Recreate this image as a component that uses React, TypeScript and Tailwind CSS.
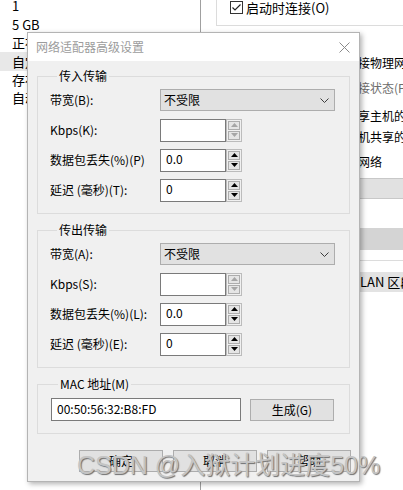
import type { ReactNode } from 'react';

function Spin({ disabled }: { disabled?: boolean }) {
  const c = disabled ? '#a6a6a6' : '#000000';
  return (
    <div className="flex h-[23px] w-[16px] flex-col gap-px border border-[#bcbcbc] bg-[#f0f0f0] p-px">
      <div className="flex flex-1 items-center justify-center border border-[#adadad] bg-[#e5e5e5]">
        <svg width="7" height="4" viewBox="0 0 7 4">
          <path d="M3.5 0L7 4H0Z" fill={c} />
        </svg>
      </div>
      <div className="flex flex-1 items-center justify-center border border-[#adadad] bg-[#e5e5e5]">
        <svg width="7" height="4" viewBox="0 0 7 4">
          <path d="M0 0H7L3.5 4Z" fill={c} />
        </svg>
      </div>
    </div>
  );
}

function NumField({ value, disabled }: { value: string; disabled?: boolean }) {
  return (
    <div className="flex h-[23px] items-stretch">
      <div className="flex h-[23px] w-[66px] items-center border border-[#7a7a7a] bg-white pb-[3px] pl-[5px] text-[12px] text-black">
        {value}
      </div>
      <Spin disabled={disabled} />
    </div>
  );
}

function Select() {
  return (
    <div className="flex h-[22px] flex-1 items-center justify-between border border-[#adadad] bg-[#e1e1e1] pl-[3px] pr-[5px] text-[12px] text-black">
      <span>不受限</span>
      <svg width="9" height="5" viewBox="0 0 9 5">
        <path d="M0.5 0.5L4.5 4.5L8.5 0.5" fill="none" stroke="#3c3c3c" strokeWidth="1" />
      </svg>
    </div>
  );
}

function Row({ label, children }: { label: string; children: ReactNode }) {
  return (
    <div className="flex h-[22px] items-center">
      <div className="w-[110px] shrink-0 text-[12px] text-black">{label}</div>
      {children}
    </div>
  );
}

function Group({ title, children, className }: { title: string; children: ReactNode; className?: string }) {
  return (
    <fieldset className={`border border-[#dcdcdc] ${className ?? ''}`}>
      <legend className="ml-[7px] px-[2px] text-[12px] leading-[16px] text-black">{title}</legend>
      {children}
    </fieldset>
  );
}

function Btn({ label, className }: { label: string; className?: string }) {
  return (
    <div
      className={`flex h-[22px] w-[84px] items-center justify-center border border-[#adadad] bg-[#e1e1e1] text-[12px] text-black ${className ?? ''}`}
    >
      {label}
    </div>
  );
}

function TransferGroup({
  title,
  keys,
  spinDisabled,
  className,
}: {
  title: string;
  keys: string[];
  spinDisabled?: boolean;
  className?: string;
}) {
  return (
    <Group title={title} className={`pb-[12px] pl-[12px] pr-[14px] pt-[5px] ${className ?? ''}`}>
      <div className="flex flex-col gap-[8px]">
        <Row label={`带宽(${keys[0]}):`}>
          <Select />
        </Row>
        <Row label={`Kbps(${keys[1]}):`}>
          <NumField value="" disabled={spinDisabled} />
        </Row>
        <Row label={`数据包丢失(%)(${keys[2]})${keys[2] === 'P' ? '' : ':'}`}>
          <NumField value="0.0" />
        </Row>
        <Row label={`延迟 (毫秒)(${keys[3]}):`}>
          <NumField value="0" />
        </Row>
      </div>
    </Group>
  );
}

export default function App() {
  return (
    <div className="relative flex h-[490px] w-[403px] overflow-hidden bg-white font-['Noto_Sans_CJK_SC','Noto_Sans',sans-serif] text-black">
      {/* left pane of the settings window behind */}
      <div className="w-[200px] shrink-0 text-[13px]">
        <div className="mt-[-3px] flex flex-col">
          {['1', '5 GB', '正在使用', '自定义', '存在', '自动检测'].map((t, i) => (
            <div
              key={i}
              className={`flex h-[18.4px] items-center whitespace-nowrap pl-[12px] ${i === 3 ? 'bg-[#e8e8e8]' : ''}`}
            >
              {t}
            </div>
          ))}
        </div>
      </div>

      {/* right pane of the settings window behind */}
      <div className="flex w-[203px] shrink-0 flex-col border-l border-[#a0a0a0] text-[12px]">
        <div className="ml-[15px] flex h-[26px] items-start border-b border-l border-[#dcdcdc] pl-[13px] pt-px">
          <div className="flex items-center gap-[3px] text-[13px] leading-[13px]">
            <svg width="13" height="13" viewBox="0 0 13 13">
              <rect x="0.5" y="0.5" width="12" height="12" fill="white" stroke="#333" />
              <path d="M2.5 6.5L5 9L10.5 3.5" fill="none" stroke="#222" strokeWidth="1.2" />
            </svg>
            <span>启动时连接(O)</span>
          </div>
        </div>
        <div className="mt-[27px] flex h-[20px] items-center whitespace-nowrap pl-[145px]">连接物理网络</div>
        <div className="mt-[5px] flex h-[20px] items-center whitespace-nowrap pl-[145px] text-[#6d6d6d]">连接状态(P)</div>
        <div className="mt-[8px] flex h-[20px] items-center whitespace-nowrap pl-[145px]">共享主机的</div>
        <div className="mt-px flex h-[20px] items-center whitespace-nowrap pl-[145px]">主机共享的</div>
        <div className="mt-[5px] flex h-[20px] items-center whitespace-nowrap pl-[145px]">的网络</div>
        <div className="mt-[6px] h-[21px] border-y border-[#c8c8c8] bg-[#e1e1e1]" />
        <div className="mt-[29px] h-[22px] bg-[#d4d4d4]" />
        <div className="mt-[10px] h-px bg-[#dcdcdc]" />
        <div className="mt-[11px] flex h-[20px] items-center whitespace-nowrap bg-[#e3e3e3] pl-[159px] text-[13px]">
          LAN 区段
        </div>
      </div>

      {/* dialog */}
      <div className="absolute left-[27px] top-[32px] flex h-[450px] w-[333px] flex-col border border-[#b4b4b4] bg-[#f0f0f0] shadow-[2px_2px_5px_rgba(0,0,0,0.3)]">
        <div className="flex h-[28px] shrink-0 items-center justify-between bg-white pl-[8px] pr-[9px]">
          <span className="text-[12px] text-[#9c9c9c]">网络适配器高级设置</span>
          <svg width="11" height="11" viewBox="0 0 11 11">
            <path d="M0.5 0.5L10.5 10.5M10.5 0.5L0.5 10.5" stroke="#8a8a8a" strokeWidth="1" />
          </svg>
        </div>

        <div className="flex flex-col px-[9px] pt-[7px]">
          <TransferGroup title="传入传输" keys={['B', 'K', 'P', 'T']} spinDisabled />
          <TransferGroup title="传出传输" keys={['A', 'S', 'L', 'E']} spinDisabled className="mt-[8px]" />

          <Group title="MAC 地址(M)" className="mt-[8px] pb-[12px] pl-[13px] pr-[15px] pt-[6px]">
            <div className="flex items-center justify-between">
              <div className="flex h-[23px] w-[190px] items-center border border-[#7a7a7a] bg-white pb-[2px] pl-[5px] text-[12px]">
                00:50:56:32:B8:FD
              </div>
              <Btn label="生成(G)" />
            </div>
          </Group>

          <div className="mr-[-1px] mt-[16px] flex justify-end gap-[10px]">
            <Btn label="确定" />
            <Btn label="取消" />
            <Btn label="帮助" />
          </div>
        </div>
      </div>

      {/* watermark */}
      <div className="pointer-events-none absolute left-[77px] top-[453px] whitespace-nowrap text-[25px] leading-none text-[#c4c4c4] [text-shadow:1px_1px_1px_#6f6f6f] font-['Liberation_Sans','Noto_Sans_CJK_SC',sans-serif]">
        CSDN @入狱计划进度50%
      </div>
    </div>
  );
}
